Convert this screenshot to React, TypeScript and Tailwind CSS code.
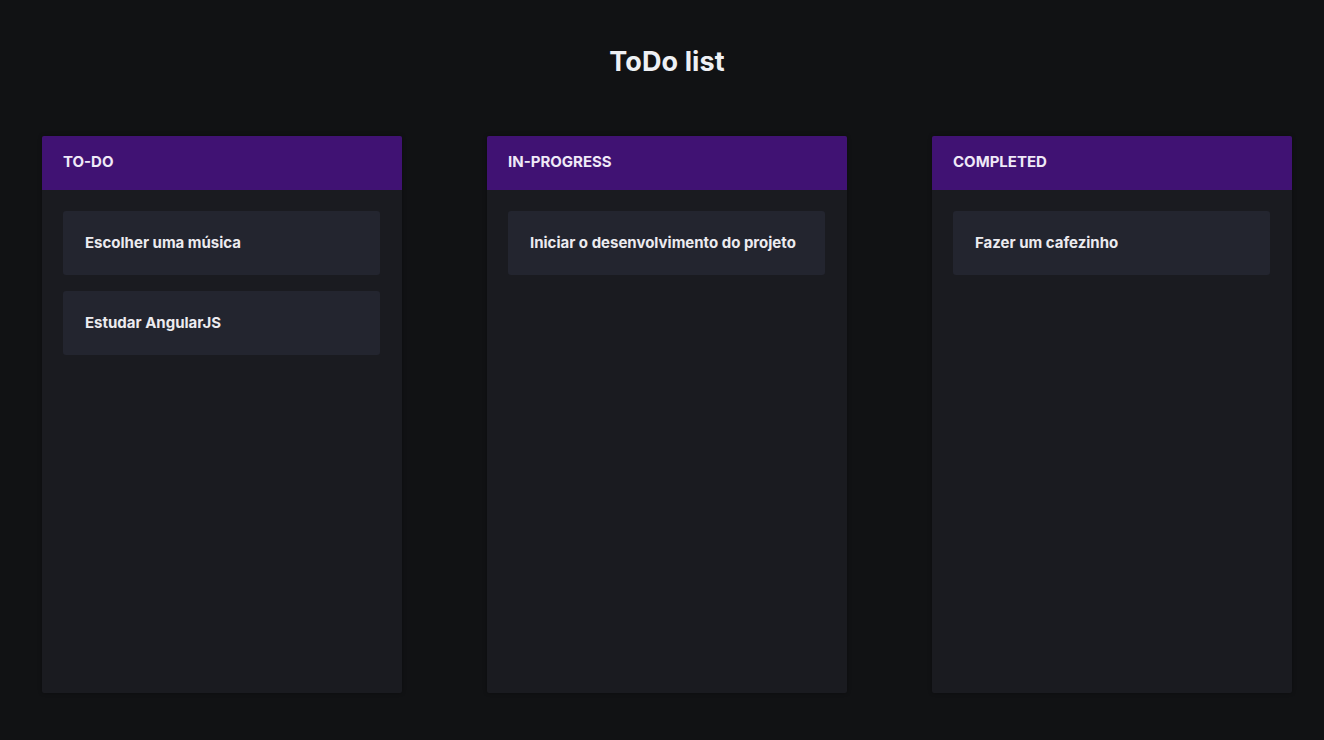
import React from "react";

type Column = {
	title: string;
	items: string[];
};

const columns: Column[] = [
	{ title: "TO-DO", items: ["Escolher uma música", "Estudar AngularJS"] },
	{ title: "IN-PROGRESS", items: ["Iniciar o desenvolvimento do projeto"] },
	{ title: "COMPLETED", items: ["Fazer um cafezinho"] },
];

const App: React.FC = () => {
	return (
		<div
			className="min-h-[740px] w-full bg-[#111214] text-[#eceaf2]"
			style={{ fontFamily: "Inter, 'Noto Sans', sans-serif" }}
		>
			<div className="w-[1250px] ml-[42px] pt-[44px]">
				<h1 className="text-center text-[27px] leading-[36px] font-bold tracking-[0.1px] text-[#eef0f4]">
					ToDo list
				</h1>

				{/* Board */}
				<div className="flex gap-[85px] mt-[56px]">
					{columns.map((col) => (
						<div
							key={col.title}
							className="w-[360px] h-[557px] bg-[#1a1b20] rounded-[2px] overflow-hidden shadow-[0_0_4px_rgba(0,0,0,0.3)]"
						>
							<div className="h-[54px] bg-[#401273] flex items-center px-[21px] pb-[2px]">
								<span className="text-[15px] font-bold text-[#efe9f7]">{col.title}</span>
							</div>
							<div className="flex flex-col gap-[16px] pt-[21px] pl-[21px] pr-[22px]">
								{col.items.map((item) => (
									<div
										key={item}
										className="h-[64px] bg-[#23252f] rounded-[3px] flex items-center px-[22px]"
									>
										<span className="text-[15px] font-bold text-[#ecebef]">{item}</span>
									</div>
								))}
							</div>
						</div>
					))}
				</div>
			</div>
		</div>
	);
};

export default App;
